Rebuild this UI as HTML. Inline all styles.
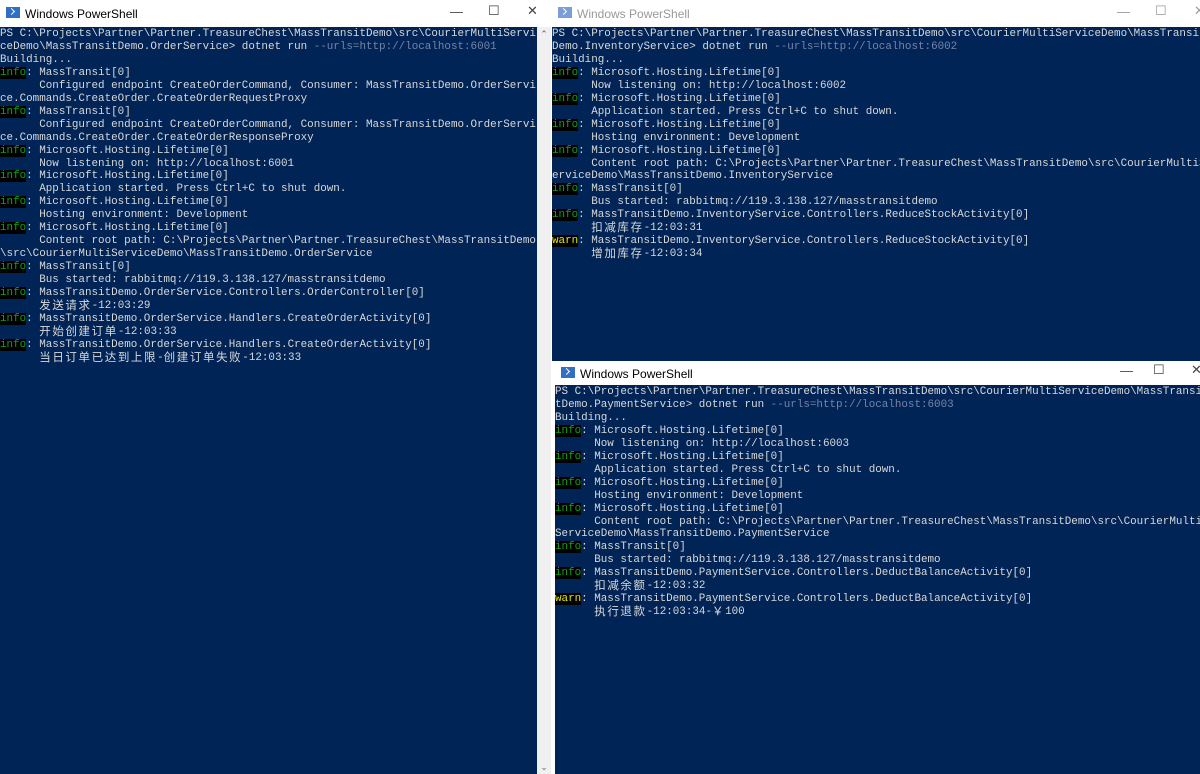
<!DOCTYPE html>
<html><head><meta charset="utf-8"><style>
body{margin:0;width:1200px;height:774px;overflow:hidden;background:#fff;position:relative;font-family:"Liberation Mono",monospace}
.t{position:absolute;background:#012456;color:#d8d8d8;font-size:10.9px;line-height:12.95px;white-space:pre;overflow:hidden;padding-top:1px;box-sizing:border-box}
.tb{position:absolute;background:#fff;height:27px;font-family:"Liberation Sans",sans-serif;font-size:12px;color:#000;overflow:hidden}
.tb .ic{position:absolute;left:6px;top:7px;width:14px;height:11px;background:#2f6fc4}
.tb .ic:after{content:"";position:absolute;left:3px;top:2px;width:4px;height:4px;border-right:1.5px solid #fff;border-bottom:1.5px solid #fff;transform:rotate(-45deg)}
.tb .tt{position:absolute;left:25px;top:7px}
.tb .b{position:absolute;top:4px;font-size:13px;color:#444;font-weight:300}
.in .tt,.in .b{color:#999}
.in .ic{background:#7a9fd6}
.i{color:#13a10e;background:#000}
.w{color:#e6e600;background:#000}
.g{color:#7684a6}
.c{font-family:"Noto Sans CJK SC",sans-serif;font-size:11.5px;letter-spacing:1.6px;display:inline-block;height:12.95px;line-height:12.95px;vertical-align:top;overflow:visible;position:relative;top:-1px}
</style></head><body>
<div class="tb" style="left:0;top:0;width:552px"><div class="ic"></div><div class="tt">Windows PowerShell</div>
<div class="b" style="left:450px">—</div><div class="b" style="left:488px;top:3px">☐</div><div class="b" style="left:527px;top:3px">✕</div></div>
<div class="t" style="left:0;top:27px;width:537px;height:747px">PS C:\Projects\Partner\Partner.TreasureChest\MassTransitDemo\src\CourierMultiServi
ceDemo\MassTransitDemo.OrderService&gt; dotnet run <span class="g">--urls=http://localhost:6001</span>
Building...
<span class="i">info</span>: MassTransit[0]
      Configured endpoint CreateOrderCommand, Consumer: MassTransitDemo.OrderServi
ce.Commands.CreateOrder.CreateOrderRequestProxy
<span class="i">info</span>: MassTransit[0]
      Configured endpoint CreateOrderCommand, Consumer: MassTransitDemo.OrderServi
ce.Commands.CreateOrder.CreateOrderResponseProxy
<span class="i">info</span>: Microsoft.Hosting.Lifetime[0]
      Now listening on: http://localhost:6001
<span class="i">info</span>: Microsoft.Hosting.Lifetime[0]
      Application started. Press Ctrl+C to shut down.
<span class="i">info</span>: Microsoft.Hosting.Lifetime[0]
      Hosting environment: Development
<span class="i">info</span>: Microsoft.Hosting.Lifetime[0]
      Content root path: C:\Projects\Partner\Partner.TreasureChest\MassTransitDemo
\src\CourierMultiServiceDemo\MassTransitDemo.OrderService
<span class="i">info</span>: MassTransit[0]
      Bus started: rabbitmq://119.3.138.127/masstransitdemo
<span class="i">info</span>: MassTransitDemo.OrderService.Controllers.OrderController[0]
      <span class="c">发送请求</span>-12:03:29
<span class="i">info</span>: MassTransitDemo.OrderService.Handlers.CreateOrderActivity[0]
      <span class="c">开始创建订单</span>-12:03:33
<span class="i">info</span>: MassTransitDemo.OrderService.Handlers.CreateOrderActivity[0]
      <span class="c">当日订单已达到上限</span>-<span class="c">创建订单失败</span>-12:03:33</div>
<div style="position:absolute;left:537px;top:27px;width:14px;height:747px;background:#f0f0f0;color:#666;font-size:9px;text-align:center;font-family:'DejaVu Sans',sans-serif"><div style="margin-top:3px">⌃</div><div style="position:absolute;bottom:1px;width:14px">⌄</div></div>

<div class="tb in" style="left:552px;top:0;width:648px"><div class="ic"></div><div class="tt">Windows PowerShell</div>
<div class="b" style="left:565px">—</div><div class="b" style="left:603px;top:3px">☐</div><div class="b" style="left:642px;top:3px">✕</div></div>
<div class="t" style="left:552px;top:27px;width:648px;height:334px">PS C:\Projects\Partner\Partner.TreasureChest\MassTransitDemo\src\CourierMultiServiceDemo\MassTransit
Demo.InventoryService&gt; dotnet run <span class="g">--urls=http://localhost:6002</span>
Building...
<span class="i">info</span>: Microsoft.Hosting.Lifetime[0]
      Now listening on: http://localhost:6002
<span class="i">info</span>: Microsoft.Hosting.Lifetime[0]
      Application started. Press Ctrl+C to shut down.
<span class="i">info</span>: Microsoft.Hosting.Lifetime[0]
      Hosting environment: Development
<span class="i">info</span>: Microsoft.Hosting.Lifetime[0]
      Content root path: C:\Projects\Partner\Partner.TreasureChest\MassTransitDemo\src\CourierMultiS
erviceDemo\MassTransitDemo.InventoryService
<span class="i">info</span>: MassTransit[0]
      Bus started: rabbitmq://119.3.138.127/masstransitdemo
<span class="i">info</span>: MassTransitDemo.InventoryService.Controllers.ReduceStockActivity[0]
      <span class="c">扣减库存</span>-12:03:31
<span class="w">warn</span>: MassTransitDemo.InventoryService.Controllers.ReduceStockActivity[0]
      <span class="c">增加库存</span>-12:03:34</div>

<div class="tb" style="left:555px;top:361px;width:645px;height:24px"><div class="ic" style="top:6px"></div><div class="tt" style="top:6px">Windows PowerShell</div>
<div class="b" style="left:565px;top:2px">—</div><div class="b" style="left:598px;top:1px">☐</div><div class="b" style="left:636px;top:1px">✕</div></div>
<div class="t" style="left:555px;top:385px;width:645px;height:389px">PS C:\Projects\Partner\Partner.TreasureChest\MassTransitDemo\src\CourierMultiServiceDemo\MassTransi
tDemo.PaymentService&gt; dotnet run <span class="g">--urls=http://localhost:6003</span>
Building...
<span class="i">info</span>: Microsoft.Hosting.Lifetime[0]
      Now listening on: http://localhost:6003
<span class="i">info</span>: Microsoft.Hosting.Lifetime[0]
      Application started. Press Ctrl+C to shut down.
<span class="i">info</span>: Microsoft.Hosting.Lifetime[0]
      Hosting environment: Development
<span class="i">info</span>: Microsoft.Hosting.Lifetime[0]
      Content root path: C:\Projects\Partner\Partner.TreasureChest\MassTransitDemo\src\CourierMulti
ServiceDemo\MassTransitDemo.PaymentService
<span class="i">info</span>: MassTransit[0]
      Bus started: rabbitmq://119.3.138.127/masstransitdemo
<span class="i">info</span>: MassTransitDemo.PaymentService.Controllers.DeductBalanceActivity[0]
      <span class="c">扣减余额</span>-12:03:32
<span class="w">warn</span>: MassTransitDemo.PaymentService.Controllers.DeductBalanceActivity[0]
      <span class="c">执行退款</span>-12:03:34-<span class="c">￥</span>100</div>
</body></html>
